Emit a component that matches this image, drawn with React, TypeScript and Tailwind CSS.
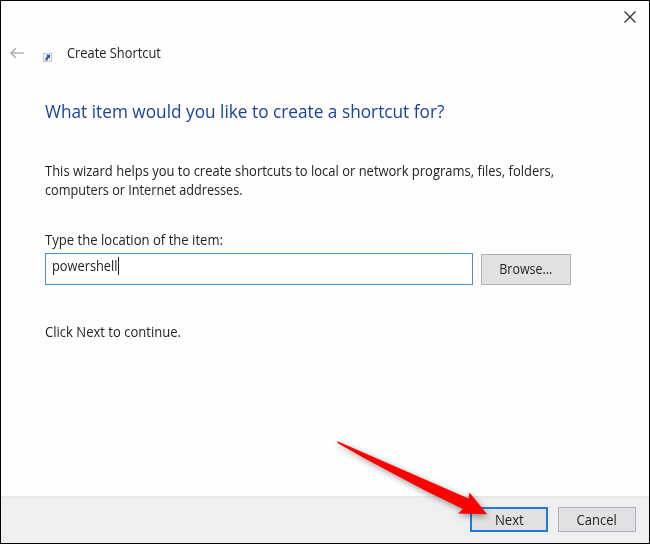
import { useState } from "react";

function BackArrow() {
  return (
    <svg viewBox="0 0 14 12" className="h-3 w-3.5" fill="none" stroke="#b4b1b6" strokeWidth="1.7">
      <path d="M14 6H1M6 1L1 6l5 5" />
    </svg>
  );
}

function ShortcutIcon() {
  return (
    <svg viewBox="0 0 9 9" className="h-[9px] w-[9px]">
      <rect x="0.5" y="0.5" width="8" height="8" fill="#f3f5f9" stroke="#c3c8d2" />
      <path d="M3 1.8h4v4L5.8 4.7C4.8 5.4 4.5 6.2 4.7 7.4H2.6C2 5.6 2.8 4.2 4.3 3.2z" fill="#2b58a8" />
    </svg>
  );
}

function CloseIcon() {
  return (
    <svg viewBox="0 0 12 12" className="h-3 w-3" fill="none" stroke="#2b2b2b" strokeWidth="1.2">
      <path d="M0.5 0.5l11 11M11.5 0.5l-11 11" />
    </svg>
  );
}

// Red pointer laid over the footer, its tip on the Next button
function Pointer() {
  return (
    <svg viewBox="0 0 170 110" className="pointer-events-none absolute left-[324px] top-[429px] h-[110px] w-[170px] drop-shadow-[1px_2px_3px_rgba(0,0,0,0.4)]">
      <path d="M12.5 11.3L143.5 68.5L144.5 62.5L162 84.3L133 83.5L138 79L100 60.5L67 43Q38 28 12.5 13z" fill="#ff0000" />
    </svg>
  );
}

export default function App() {
  const [location, setLocation] = useState("powershell");

  return (
    <div className="relative flex h-[544px] w-[650px] flex-col border border-black bg-[#fefefe] font-['Open_Sans','Noto_Sans',sans-serif] text-[14px] leading-[18px] text-[#232323]">
      <header className="flex h-8 shrink-0 justify-end pr-[13px] pt-2.5">
        <button aria-label="Close" className="h-3">
          <CloseIcon />
        </button>
      </header>
      <div className="flex h-10 shrink-0 items-center pl-[9px]">
        <button aria-label="Back" className="h-3">
          <BackArrow />
        </button>
        <div className="ml-[19px] mt-[9px]">
          <ShortcutIcon />
        </div>
        <span className="ml-[15px] origin-left scale-x-[0.917]">Create Shortcut</span>
      </div>

      <main className="flex grow flex-col items-start pl-11">
        <h1 className="mt-[26px] origin-left scale-x-[0.932] whitespace-nowrap text-[18.5px] leading-6 text-[#1a419c]">
          What item would you like to create a shortcut for?
        </h1>
        <p className="mt-[39px] flex flex-col items-start whitespace-nowrap">
          <span className="origin-left scale-x-[0.927]">
            This wizard helps you to create shortcuts to local or network programs, files, folders,
          </span>
          <span className="mt-px origin-left scale-x-[0.906]">computers or Internet addresses.</span>
        </p>
        <label htmlFor="location" className="mt-8 origin-left scale-x-[0.935] whitespace-nowrap">
          Type the location of the item:
        </label>
        <div className="mt-1 flex items-center gap-2">
          <div className="flex h-8 w-[428px] items-start border border-[#4792cc] bg-white pl-1.5 pt-[3px]">
            <input
              id="location"
              value={location}
              onChange={(e) => setLocation(e.target.value)}
              size={1}
              className="-mr-1.5 h-[18px] w-[72px] origin-left scale-x-[0.915] outline-none"
            />
            <span className="h-[18px] w-px bg-[#222222]" />
          </div>
          <button className="h-[31px] w-[90px] border border-[#b2b0b5] bg-[#e2e0e3]">
            <span className="inline-block scale-x-[0.89]">Browse...</span>
          </button>
        </div>
        <p className="mt-[38px] origin-left scale-x-[0.932] whitespace-nowrap">Click Next to continue.</p>
      </main>

      <footer className="flex h-[47px] shrink-0 items-start justify-end gap-2.5 border-t-2 border-[#e9e7ea] bg-[#f0eef1] pr-[13px] pt-[9px]">
        <button className="h-[25px] w-[78px] border-2 border-[#197fd6] bg-[#e2e0e3] pt-px">
          <span className="inline-block scale-x-[0.94]">Next</span>
        </button>
        <button className="h-[25px] w-[78px] border border-[#b2b0b5] bg-[#e2e0e3] pt-px">
          <span className="inline-block scale-x-[0.93]">Cancel</span>
        </button>
      </footer>
      <Pointer />
    </div>
  );
}
